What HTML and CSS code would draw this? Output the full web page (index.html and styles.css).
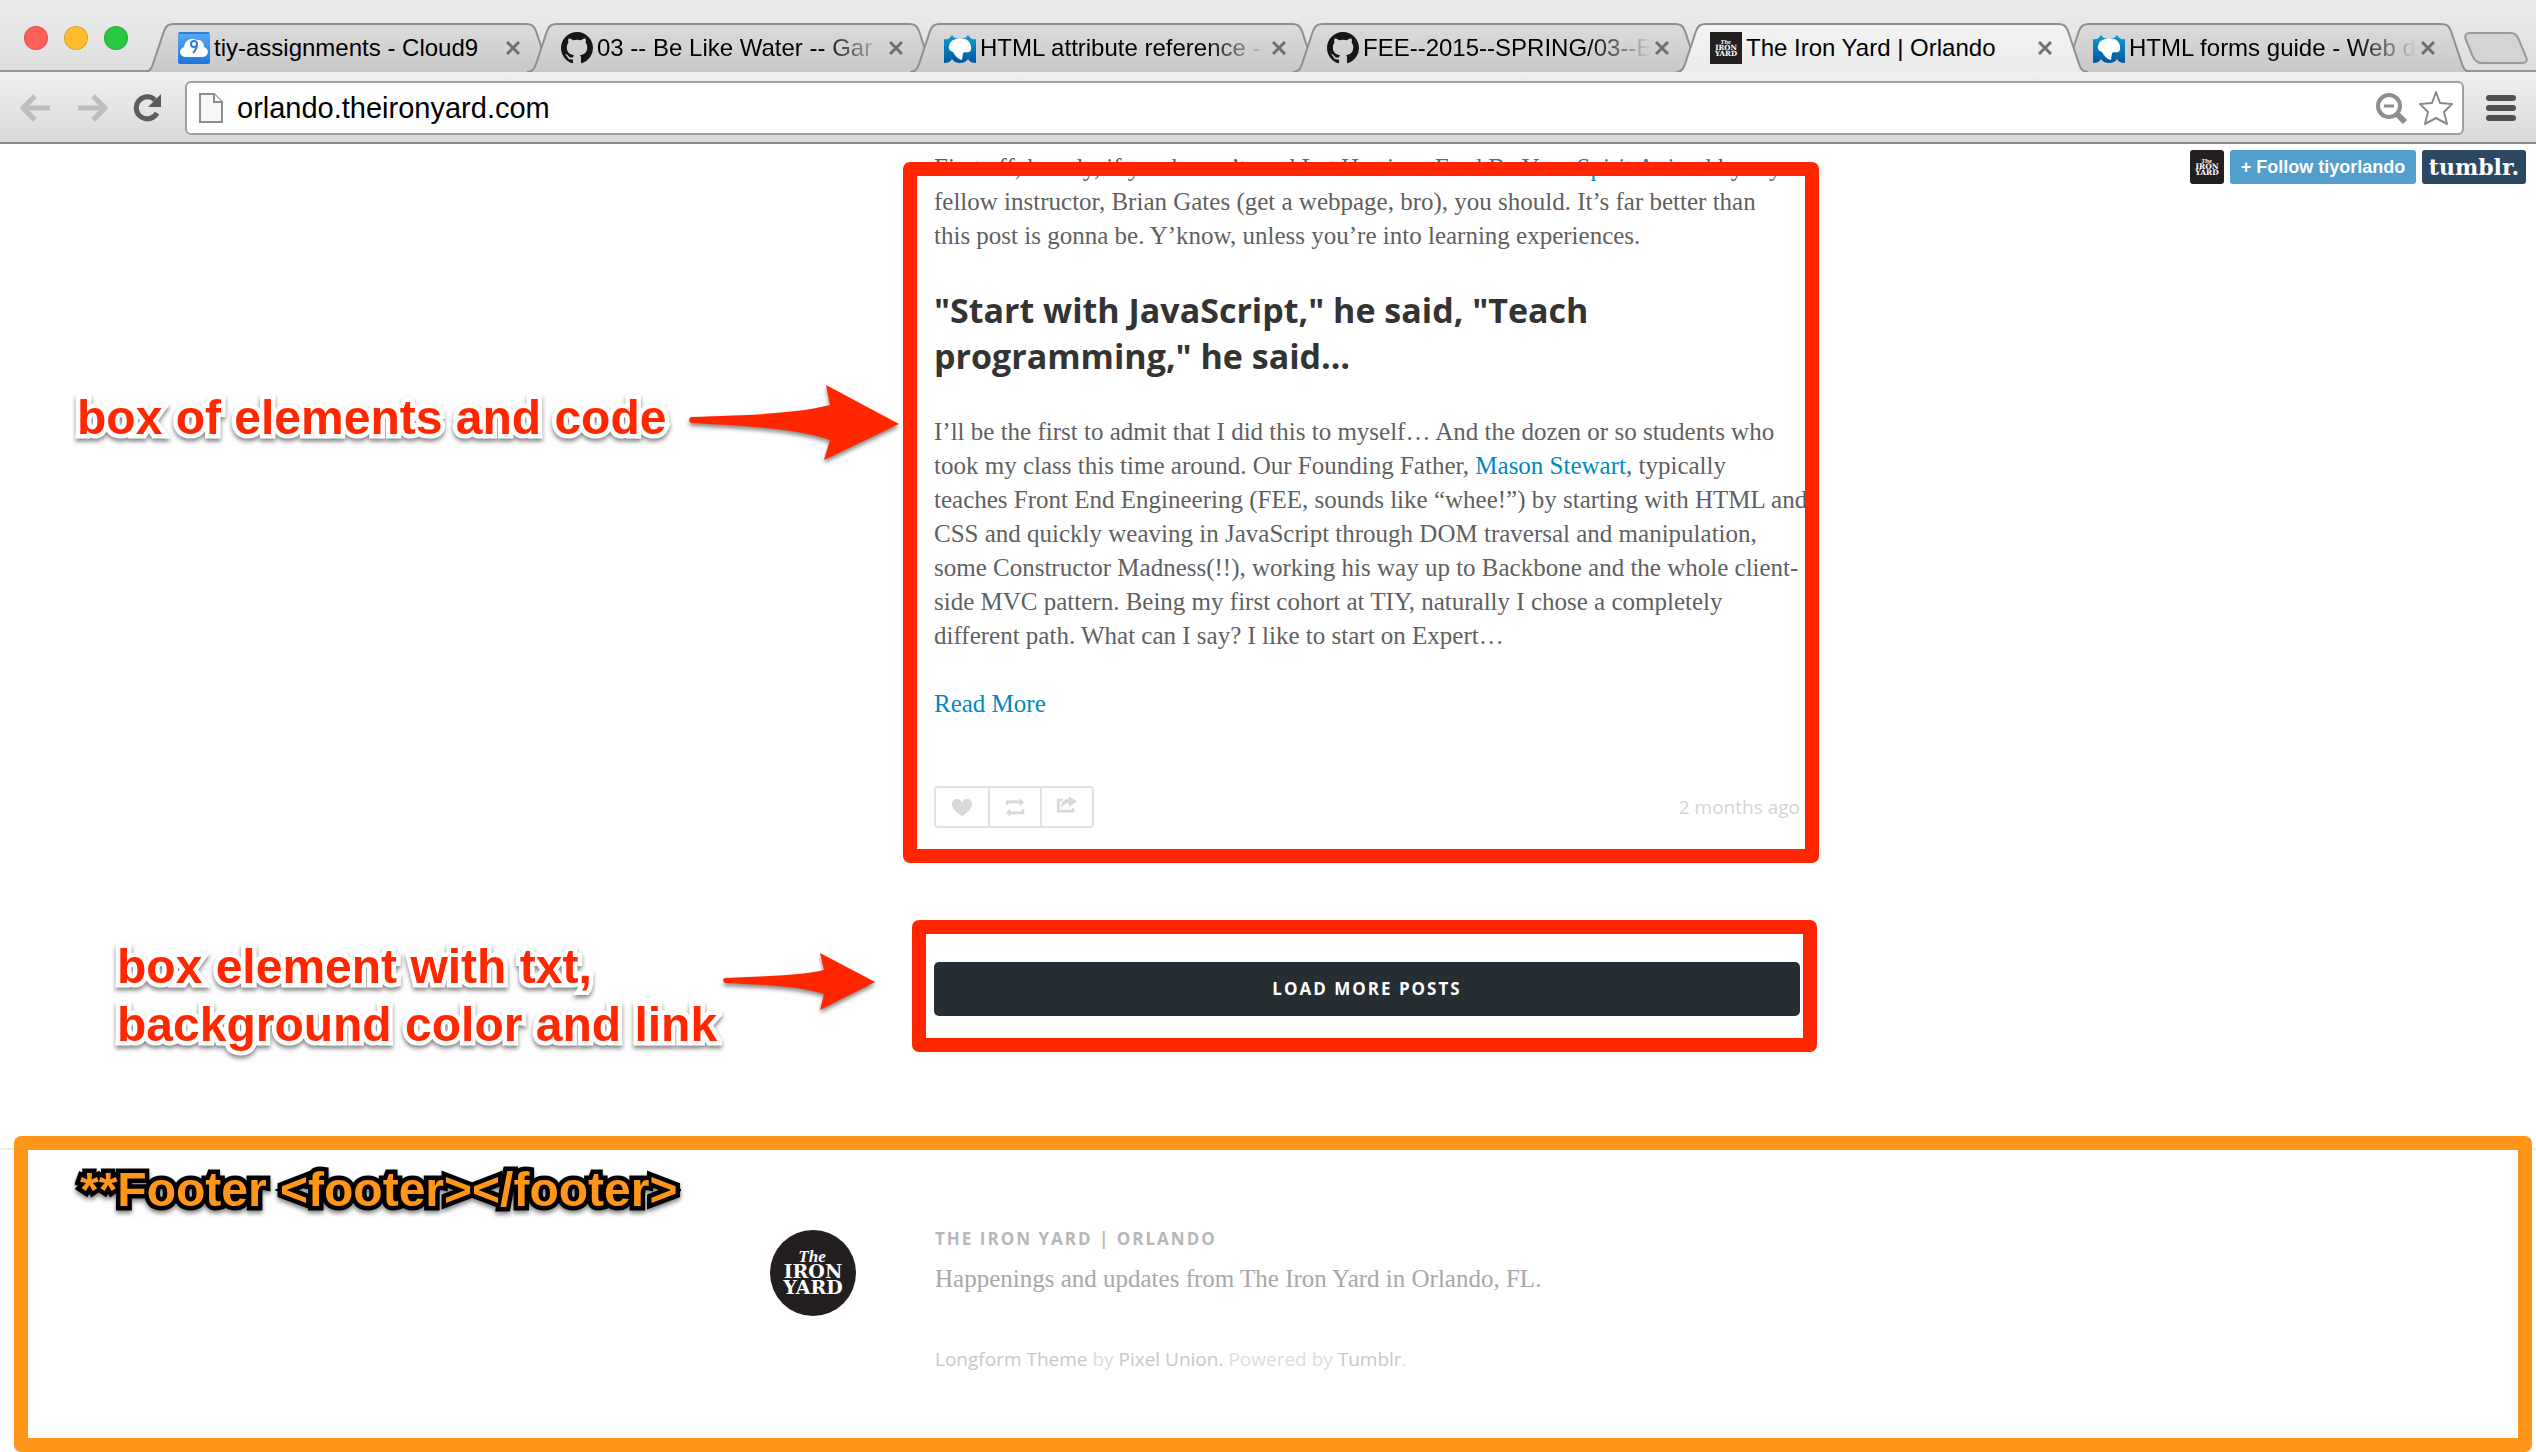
FILE: index.html
```html
<!DOCTYPE html>
<html lang="en">
<head>
<meta charset="utf-8">
<title>The Iron Yard | Orlando</title>
<link rel="stylesheet" href="styles.css">
</head>
<body>
<svg class="defs" aria-hidden="true">
  <defs>
    <linearGradient id="tabFill" x1="0" y1="0" x2="0" y2="1"><stop offset="0" stop-color="#dcdcdc"/><stop offset="1" stop-color="#c8c8c9"/></linearGradient>
    <linearGradient id="activeFill" x1="0" y1="0" x2="0" y2="1"><stop offset="0" stop-color="#f3f3f3"/><stop offset="1" stop-color="#ebebeb"/></linearGradient>
    <linearGradient id="mdnFill" x1="0" y1="0" x2="0" y2="1"><stop offset="0" stop-color="#0a9fd9"/><stop offset="1" stop-color="#02559c"/></linearGradient>
    <linearGradient id="cloudFill" x1="0" y1="0" x2="0" y2="1"><stop offset="0" stop-color="#5cabf8"/><stop offset="1" stop-color="#1e74d8"/></linearGradient>
    <symbol id="tabShape" viewBox="0 0 412 50" preserveAspectRatio="none"><path d="M0 49C7 49 8 44 10 38L20 8C22 3 24 1 30 1H382C388 1 390 3 392 8L402 38C404 44 405 49 412 49" stroke="#8f8f8f" stroke-width="2"/></symbol>
    <symbol id="github" viewBox="0 0 16 16"><path fill="#171515" d="M8 0C3.58 0 0 3.58 0 8c0 3.54 2.29 6.53 5.47 7.59.4.07.55-.17.55-.38 0-.19-.01-.82-.01-1.49-2.01.37-2.53-.49-2.69-.94-.09-.23-.48-.94-.82-1.13-.28-.15-.68-.52-.01-.53.63-.01 1.08.58 1.23.82.72 1.21 1.87.87 2.33.66.07-.52.28-.87.51-1.07-1.78-.2-3.64-.89-3.64-3.95 0-.87.31-1.59.82-2.15-.08-.2-.36-1.02.08-2.12 0 0 .67-.21 2.2.82.64-.18 1.32-.27 2-.27s1.36.09 2 .27c1.53-1.04 2.2-.82 2.2-.82.44 1.1.16 1.92.08 2.12.51.56.82 1.27.82 2.15 0 3.07-1.87 3.75-3.65 3.95.29.25.54.73.54 1.48 0 1.07-.01 1.93-.01 2.2 0 .21.15.46.55.38A8.01 8.01 0 0 0 16 8c0-4.42-3.58-8-8-8z"/></symbol>
    <symbol id="mdn" viewBox="0 0 32 32"><path fill="url(#mdnFill)" d="M0 7C4 8 6 6 8 3C10 6 13 7 16 7C19 7 22 6 24 3C26 6 28 8 32 7V31C28 31 26 30 24 27C22 30 19 31 16 31C13 31 10 30 8 27C6 30 4 31 0 31Z"/><path fill="#fff" d="M5 14C6 8 11 7 14 7C16 5 18 8 21 7C25 8 28 13 27 18C25 22 21 19 19 21L18 28C13 27 11 23 9 20C6 19 4 17 5 14Z"/></symbol>
    <symbol id="cloud9" viewBox="0 0 32 32"><rect width="32" height="32" rx="2" fill="url(#cloudFill)"/><path d="M1 1H31" stroke="#2f7fd8" stroke-width="2"/><path fill="#fff" d="M8 25C1 25 0 17 6 15C7 8 14 5 18 8C23 7 26 11 26 15C32 17 31 25 24 25Z"/><circle cx="16" cy="12" r="3" fill="none" stroke="#2f7fd8" stroke-width="2"/><path d="M19 12C19 16 17 19 15 21" fill="none" stroke="#2f7fd8" stroke-width="2"/></symbol>
    <symbol id="close" viewBox="0 0 14 14"><path d="M1 1L13 13M13 1L1 13" stroke="#707070" stroke-width="3"/></symbol>
    <symbol id="ironyard" viewBox="0 0 86 86"><rect width="86" height="86" fill="#231f20"/><g fill="#fff" text-anchor="middle"><text x="42" y="32" font-family="Liberation Serif, serif" font-style="italic" font-weight="bold" font-size="17">The</text><text x="43" y="48" font-family="DejaVu Serif, serif" font-weight="bold" font-size="19">IRON</text><text x="43" y="64" font-family="DejaVu Serif, serif" font-weight="bold" font-size="19">YARD</text></g></symbol>
  </defs>
</svg>

<header class="browser">
  <div class="tabstrip">
    <div class="lights"><i class="light red"></i><i class="light yellow"></i><i class="light green"></i></div>
    <nav class="tabs" aria-label="Tabs">
      <div class="tab"><svg class="shape" fill="url(#tabFill)"><use href="#tabShape"/></svg><svg class="fav"><use href="#cloud9"/></svg><span class="tab-title">tiy-assignments - Cloud9</span><button class="close" aria-label="Close tab"><svg><use href="#close"/></svg></button></div>
      <div class="tab"><svg class="shape" fill="url(#tabFill)"><use href="#tabShape"/></svg><svg class="fav"><use href="#github"/></svg><span class="tab-title fade">03 -- Be Like Water -- Gar</span><button class="close" aria-label="Close tab"><svg><use href="#close"/></svg></button></div>
      <div class="tab"><svg class="shape" fill="url(#tabFill)"><use href="#tabShape"/></svg><svg class="fav"><use href="#mdn"/></svg><span class="tab-title fade">HTML attribute reference -</span><button class="close" aria-label="Close tab"><svg><use href="#close"/></svg></button></div>
      <div class="tab"><svg class="shape" fill="url(#tabFill)"><use href="#tabShape"/></svg><svg class="fav"><use href="#github"/></svg><span class="tab-title fade">FEE--2015--SPRING/03--E</span><button class="close" aria-label="Close tab"><svg><use href="#close"/></svg></button></div>
      <div class="tab active"><svg class="shape" fill="url(#activeFill)"><use href="#tabShape"/></svg><svg class="fav"><use href="#ironyard"/></svg><span class="tab-title">The Iron Yard | Orlando</span><button class="close" aria-label="Close tab"><svg><use href="#close"/></svg></button></div>
      <div class="tab"><svg class="shape" fill="url(#tabFill)"><use href="#tabShape"/></svg><svg class="fav"><use href="#mdn"/></svg><span class="tab-title fade">HTML forms guide - Web d</span><button class="close" aria-label="Close tab"><svg><use href="#close"/></svg></button></div>
    </nav>
    <button class="newtab" aria-label="New tab"><svg viewBox="0 0 64 32"><path d="M6 1H46C51 1 53 3 55 8L62 25C64 29 62 31 58 31H18C13 31 11 29 9 25L2 8C0 3 2 1 6 1Z" fill="#d4d4d4" stroke="#999" stroke-width="2"/></svg></button>
  </div>
  <div class="toolbar">
    <div class="nav-buttons">
      <button aria-label="Back"><svg viewBox="0 0 32 28"><path d="M15 2L3 14L15 26M4 14H30" fill="none" stroke="#bdbdbd" stroke-width="5" stroke-linejoin="round"/></svg></button>
      <button aria-label="Forward"><svg viewBox="0 0 32 28"><path d="M17 2L29 14L17 26M28 14H2" fill="none" stroke="#bdbdbd" stroke-width="5" stroke-linejoin="round"/></svg></button>
      <button aria-label="Reload"><svg viewBox="0 0 32 28"><path d="M25 19A11 11 0 1 1 23 6" fill="none" stroke="#5c5c5c" stroke-width="5"/><path d="M29 0V13H16Z" fill="#5c5c5c"/></svg></button>
    </div>
    <div class="omnibox">
      <svg class="page-icon" viewBox="0 0 24 30"><path d="M1 1H15L23 9V29H1Z" fill="#f7f7f7" stroke="#8d8d8d" stroke-width="2"/><path d="M15 1V9H23" fill="#fff" stroke="#8d8d8d" stroke-width="2"/></svg>
      <input class="url" type="text" aria-label="Address" value="orlando.theironyard.com">
      <svg class="zoom" viewBox="0 0 32 32"><circle cx="13" cy="14" r="11" fill="none" stroke="#8e8e8e" stroke-width="4"/><path d="M8 14H18" stroke="#8e8e8e" stroke-width="3"/><path d="M21 22L29 30" stroke="#8e8e8e" stroke-width="6"/></svg>
      <svg class="star" viewBox="0 0 36 36"><path d="M18 2L22 13L34 14L26 22L29 34L18 28L7 34L10 22L2 14L14 13Z" fill="#fff" stroke="#8a8a8a" stroke-width="2" stroke-linejoin="round"/></svg>
    </div>
    <button class="menu" aria-label="Menu"><i></i><i></i><i></i></button>
  </div>
</header>

<main class="page">
  <div class="tumblr-bar">
    <svg class="bar-avatar"><use href="#ironyard"/></svg>
    <a class="follow" href="#">+ Follow tiyorlando</a>
    <a class="tumblr" href="#">tumblr.</a>
  </div>

  <article class="post column">
    <div class="body-text">
      <p>First off, howdy, if you haven’t read <a href="#">Let Harrison Ford Be Your Spirit Animal</a> by my<br>fellow instructor, Brian Gates (get a webpage, bro), you should. It’s far better than<br>this post is gonna be. Y’know, unless you’re into learning experiences.</p>
      <h2>"Start with JavaScript," he said, "Teach<br>programming," he said…</h2>
      <p>I’ll be the first to admit that I did this to myself… And the dozen or so students who<br>took my class this time around. Our Founding Father, <a href="#">Mason Stewart</a>, typically<br>teaches Front End Engineering (FEE, sounds like “whee!”) by starting with HTML and<br>CSS and quickly weaving in JavaScript through DOM traversal and manipulation,<br>some Constructor Madness(!!), working his way up to Backbone and the whole client-<br>side MVC pattern. Being my first cohort at TIY, naturally I chose a completely<br>different path. What can I say? I like to start on Expert…</p>
      <p><a href="#">Read More</a></p>
    </div>
    <div class="post-meta">
      <div class="actions">
        <button aria-label="Like"><svg viewBox="0 0 24 24"><path d="M12 22C6 18 1 14 1 9C1 3 9 1 12 7C15 1 23 3 23 9C23 14 18 18 12 22Z" fill="#d8d8d8"/></svg></button>
        <button aria-label="Reblog"><svg viewBox="0 0 24 24"><path d="M2 11V5H17V2L22 7L17 11V8H6ZM22 13V20H7V23L2 18L7 14V17H18Z" fill="#d8d8d8"/></svg></button>
        <button aria-label="Share"><svg viewBox="0 0 24 24"><path d="M8 3H1V18H20V13H17V15H4V6H6Z" fill="#d8d8d8"/><path d="M14 0L23 6L14 12V8C10 8 8 10 6 13C5 7 9 3 14 3Z" fill="#d8d8d8"/></svg></button>
      </div>
      <time class="date">2 months ago</time>
    </div>
    <div class="outline outline-post"></div>
  </article>

  <div class="more column">
    <div class="outline outline-more"></div>
    <a class="load" href="#">LOAD MORE POSTS</a>
  </div>

  <div class="note note-post">box of elements and code</div>
  <svg class="arrow arrow-post" viewBox="0 0 216 80"><path d="M6 35C60 33 110 32 145 23L141 3L214 42L139 78L145 58C110 46 60 44 6 41Q2 38 6 35Z" fill="#ff2600"/></svg>
  <div class="note note-more">box element with txt,<br>background color and link</div>
  <svg class="arrow arrow-more" viewBox="0 0 156 62"><path d="M4 27C40 25 78 25 103 19L99 2L154 31L99 59L103 43C78 35 40 34 4 32Q0 29 4 27Z" fill="#ff2600"/></svg>

  <footer class="footer">
    <div class="outline outline-footer"></div>
    <div class="note note-footer">**Footer &lt;footer&gt;&lt;/footer&gt;</div>
    <div class="footer-inner">
      <svg class="avatar"><use href="#ironyard"/></svg>
      <div class="about">
        <h3>THE IRON YARD | ORLANDO</h3>
        <p class="tagline">Happenings and updates from The Iron Yard in Orlando, FL.</p>
        <p class="credits"><a href="#">Longform Theme</a> by <a href="#">Pixel Union.</a> Powered by <a href="#">Tumblr</a>.</p>
      </div>
    </div>
  </footer>
</main>
</body>
</html>
```
FILE: styles.css
```css
* { box-sizing: border-box; }
body { margin: 0; background: #fff; font-family: "Open Sans", sans-serif; }
a { text-decoration: none; color: #0089bd; }
button { border: 0; padding: 0; background: none; display: block; }
svg { display: block; }
h2, h3, p { margin: 0; }
.defs { position: absolute; width: 0; height: 0; }

/* browser window */
.browser { font-family: "Liberation Sans", Arial, sans-serif; position: relative; z-index: 2; }
.tabstrip { display: flex; height: 72px; padding-top: 23px; background: linear-gradient(#ececec, #dedede); box-shadow: inset 0 -2px #999; overflow: hidden; }
.lights { display: flex; gap: 16px; padding: 3px 0 0 24px; width: 144px; flex: none; }
.light { width: 24px; height: 24px; border-radius: 50%; border: 1px solid #0002; }
.red { background: #ff5f57; }
.yellow { background: #ffbd2e; }
.green { background: #28c940; }
.tabs { display: flex; padding-right: 22px; }
.tab { position: relative; display: flex; align-items: center; flex: none; width: 412px; height: 50px; margin-right: -29px; padding: 0 36px 0 34px; gap: 4px; }
.tab.active { z-index: 1; }
.shape { position: absolute; inset: 0; width: 100%; height: 100%; }
.fav { position: relative; width: 32px; height: 32px; flex: none; }
.tab-title { position: relative; flex: 1; min-width: 0; white-space: nowrap; font-size: 24px; line-height: 32px; color: #000; }
.fade { -webkit-mask-image: linear-gradient(to right, #000 78%, transparent 100%); mask-image: linear-gradient(to right, #000 78%, transparent 100%); }
.close { position: relative; }
.close svg { width: 14px; height: 14px; }
.newtab { align-self: flex-start; margin-top: 9px; flex: none; }
.newtab svg { width: 64px; height: 32px; }
.toolbar { display: flex; align-items: center; height: 72px; padding: 2px 20px 0; background: linear-gradient(#f0f0f0, #d9d9d9); border-bottom: 2px solid #8a8a8a; }
.nav-buttons { display: flex; gap: 24px; width: 165px; }
.nav-buttons svg { width: 32px; height: 28px; }
.omnibox { flex: 1; display: flex; align-items: center; height: 54px; padding: 0 8px 0 12px; background: #fff; border: 2px solid #a0a0a0; border-radius: 6px; }
.page-icon { width: 24px; height: 30px; }
.url { flex: 1; border: 0; outline: 0; padding: 0; margin-left: 14px; height: 40px; font: 29px "Liberation Sans", Arial, sans-serif; color: #000; }
.zoom { width: 32px; height: 32px; }
.star { width: 36px; height: 36px; margin-left: 10px; }
.menu { display: flex; flex-direction: column; gap: 4px; margin-left: 22px; }
.menu i { width: 30px; height: 6px; border-radius: 3px; background: #505050; }

/* blog */
.page { position: relative; }
.tumblr-bar { position: absolute; top: 6px; right: 10px; display: flex; gap: 6px; height: 34px; }
.bar-avatar { width: 34px; height: 34px; border-radius: 3px; }
.follow, .tumblr { display: flex; align-items: center; justify-content: center; color: #fff; border-radius: 3px; font-weight: bold; }
.follow { width: 186px; background: #529ecc; font-family: "Liberation Sans", Arial, sans-serif; font-size: 18px; }
.tumblr { width: 104px; background: #2c4762; font-family: "DejaVu Serif", serif; font-size: 22px; }
.column { position: relative; width: 866px; margin: 0 auto; left: 99px; }
.outline { position: absolute; border: 14px solid #ff2600; border-radius: 7px; pointer-events: none; }
.outline-post { inset: 18px -19px -35px -31px; }
.body-text { padding-top: 7px; font-family: "Liberation Serif", serif; font-size: 25px; line-height: 34px; color: #5f5f5f; }
.body-text p { white-space: nowrap; margin-bottom: 34px; }
.body-text h2 { margin: 0 0 36px; font: bold 34px/46px "Open Sans", sans-serif; color: #333; white-space: nowrap; }
.post-meta { display: flex; justify-content: space-between; align-items: center; margin-top: 65px; }
.actions { display: flex; border: 2px solid #e2e2e2; border-radius: 4px; }
.actions button { width: 52px; height: 38px; display: grid; place-items: center; }
.actions button + button { border-left: 2px solid #e2e2e2; }
.actions svg { width: 22px; height: 22px; }
.date { font-size: 19px; color: #d5d5d5; }
.more { margin-top: 134px; }
.outline-more { inset: -42px -17px -36px -22px; }
.load { display: block; position: relative; height: 54px; border-radius: 5px; background: #262d33; color: #fff; font-weight: bold; font-size: 17px; line-height: 54px; letter-spacing: 2px; text-align: center; }

/* notes drawn over the page */
.note { position: absolute; font: bold 48px/58px "Liberation Sans", Arial, sans-serif; color: #ff2600; white-space: nowrap; paint-order: stroke fill; -webkit-text-stroke: 9px #fff; filter: drop-shadow(0 3px 2px #0007); }
.note-post { left: 77px; top: 245px; }
.note-more { left: 117px; top: 794px; }
.note-footer { left: 80px; top: 11px; color: #ff9519; -webkit-text-stroke-color: #000; }
.arrow { position: absolute; filter: drop-shadow(0 3px 2px #0007); }
.arrow-post { left: 685px; top: 238px; width: 216px; height: 80px; }
.arrow-more { left: 721px; top: 807px; width: 156px; height: 62px; }

.footer { position: relative; margin-top: 132px; border-top: 2px solid #eee; padding: 80px 0; }
.outline-footer { inset: -14px 4px 0 14px; border-color: #ff9519; }
.footer-inner { display: flex; width: 1064px; margin: 0 auto; padding-left: 34px; gap: 79px; }
.avatar { width: 86px; height: 86px; border-radius: 50%; }
.about h3 { font-size: 17px; line-height: 18px; letter-spacing: 2px; color: #b8b8b8; }
.tagline { margin-top: 14px; font-family: "Liberation Serif", serif; font-size: 25px; line-height: 34px; color: #a8a8a8; }
.credits { margin-top: 50px; font-size: 19px; line-height: 26px; color: #ddd; }
.credits a { color: #c8c8c8; }
```
